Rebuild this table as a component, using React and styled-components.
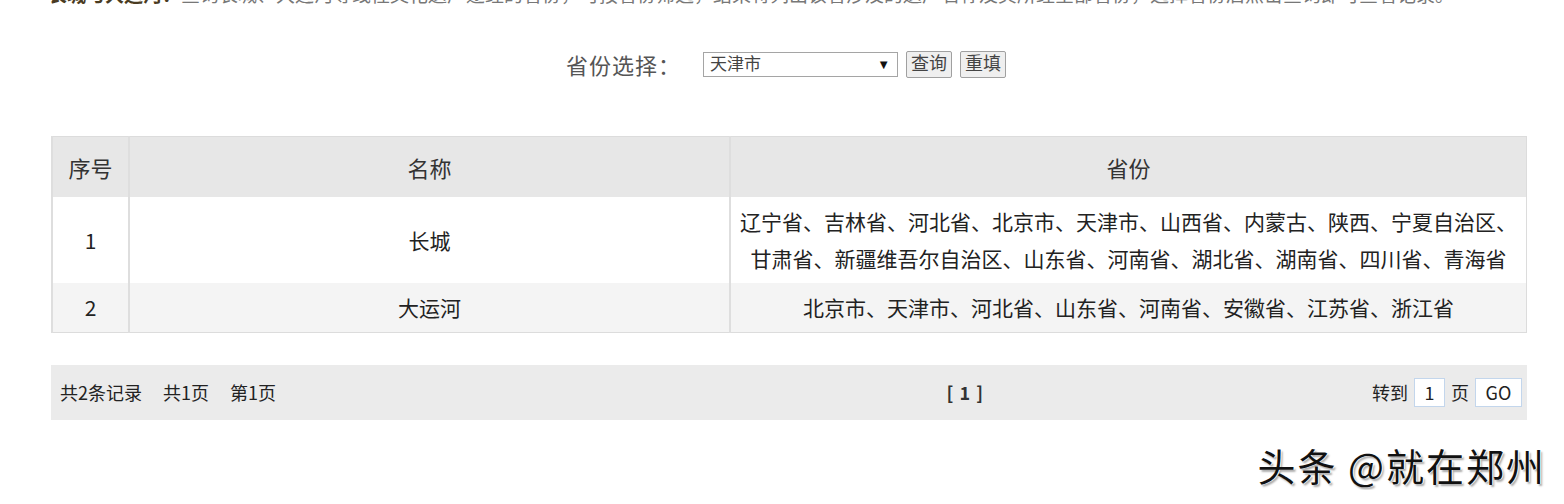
import React from "react";
import styled, { createGlobalStyle } from "styled-components";

const GlobalStyle = createGlobalStyle`
  body {
    margin: 0;
    background: #fff;
    font-family: "Noto Sans CJK SC", "Noto Sans", sans-serif;
    color: #222;
  }
`;

const Page = styled.div`
  width: 1564px;
  display: flex;
  flex-direction: column;
`;

const IntroClip = styled.div`
  height: 5px;
  overflow: hidden;
  display: flex;
  flex-direction: column;
  justify-content: flex-end;
  padding-left: 48px;
`;

const IntroLine = styled.div`
  font-size: 19px;
  line-height: 22px;
  white-space: nowrap;
  color: #777;
  b {
    color: #4a3b22;
    font-weight: 700;
  }
`;

const FormRow = styled.div`
  display: flex;
  align-items: center;
  justify-content: center;
  height: 27px;
  margin-top: 46px;
  padding-left: 8px;
`;

const Label = styled.span`
  font-size: 22px;
  line-height: 27px;
  color: #555;
  margin-right: 22px;
  letter-spacing: 1px;
`;

const SelectBox = styled.div`
  width: 195px;
  height: 25px;
  box-sizing: border-box;
  border: 1px solid #a5a5a5;
  display: flex;
  align-items: center;
  justify-content: space-between;
  padding: 0 7px 0 6px;
  font-family: "Liberation Serif", "Noto Sans CJK SC", serif;
  font-size: 17px;
  line-height: 23px;
  color: #444;
  span:last-child {
    font-size: 13px;
    color: #111;
  }
`;

const Button = styled.button`
  height: 27px;
  margin-left: 8px;
  padding: 0 4px;
  border: 1px solid #a0a0a0;
  border-radius: 2px;
  background: #efefef;
  font-family: "Liberation Serif", "Noto Sans CJK SC", serif;
  font-size: 18px;
  line-height: 25px;
  color: #444;
`;

const Table = styled.table`
  margin: 58px 0 0 51px;
  width: 1476px;
  border-collapse: collapse;
  table-layout: fixed;
  border: 1px solid #dcdcdc;
`;

const HeadCell = styled.th`
  height: 60px;
  padding: 0;
  background: #e7e7e7;
  border-left: 2px solid #dedede;
  font-size: 22px;
  line-height: 30px;
  font-weight: 400;
  color: #333;
  width: ${(p) => p.$w || "auto"};
`;

const Row = styled.tr`
  background: ${(p) => (p.$alt ? "#f4f4f4" : "#fff")};
`;

const Cell = styled.td`
  padding: 6px 2px;
  text-align: center;
  font-size: 21px;
  line-height: 37px;
  color: #222;
  border-left: 2px solid #dedede;
`;

const Pager = styled.div`
  margin: 32px 0 0 51px;
  width: 1476px;
  height: 55px;
  background: #ebebeb;
  display: grid;
  grid-template-columns: 1fr auto 538px;
  align-items: center;
  padding: 0 5px 0 9px;
  box-sizing: border-box;
  font-size: 18px;
  line-height: 29px;
  color: #222;
`;

const Summary = styled.div`
  span + span {
    margin-left: 21px;
  }
`;

const Current = styled.div`
  font-weight: 700;
  color: #333;
  letter-spacing: 1px;
`;

const Jump = styled.div`
  justify-self: end;
  display: flex;
  align-items: center;
  gap: 6px;
`;

const JumpBox = styled.span`
  height: 29px;
  min-width: ${(p) => p.$w}px;
  box-sizing: border-box;
  border: 1px solid #c3d6ec;
  background: #fff;
  display: inline-flex;
  align-items: center;
  justify-content: center;
  font-size: 18px;
`;

const Watermark = styled.div`
  align-self: flex-end;
  margin: 20px 18px 0 0;
  font-size: 38px;
  line-height: 50px;
  color: #111;
  letter-spacing: 2px;
  text-shadow: 1px 0 0 #fff, 2px 2px 2px rgba(0, 0, 0, 0.35);
`;

const rows = [
  {
    id: 1,
    name: "长城",
    provinces:
      "辽宁省、吉林省、河北省、北京市、天津市、山西省、内蒙古、陕西、宁夏自治区、甘肃省、新疆维吾尔自治区、山东省、河南省、湖北省、湖南省、四川省、青海省",
  },
  {
    id: 2,
    name: "大运河",
    provinces: "北京市、天津市、河北省、山东省、河南省、安徽省、江苏省、浙江省",
  },
];

export default function App() {
  return (
    <Page>
      <GlobalStyle />
      <IntroClip>
        <IntroLine>
          <b>长城与大运河：</b>
          查询长城、大运河等线性文化遗产途经的省份，可按省份筛选，结果将列出该省涉及的遗产名称及其所经全部省份，选择省份后点击查询即可查看记录。
        </IntroLine>
      </IntroClip>

      <FormRow>
        <Label>省份选择：</Label>
        <SelectBox>
          <span>天津市</span>
          <span>▼</span>
        </SelectBox>
        <Button>查询</Button>
        <Button>重填</Button>
      </FormRow>

      <Table>
        <thead>
          <tr>
            <HeadCell $w="75px">序号</HeadCell>
            <HeadCell $w="599px">名称</HeadCell>
            <HeadCell>省份</HeadCell>
          </tr>
        </thead>
        <tbody>
          {rows.map((r, i) => (
            <Row key={r.id} $alt={i % 2 === 1}>
              <Cell>{r.id}</Cell>
              <Cell>{r.name}</Cell>
              <Cell>{r.provinces}</Cell>
            </Row>
          ))}
        </tbody>
      </Table>

      <Pager>
        <Summary>
          <span>共2条记录</span>
          <span>共1页</span>
          <span>第1页</span>
        </Summary>
        <Current>[ 1 ]</Current>
        <Jump>
          <span>转到</span>
          <JumpBox $w={31}>1</JumpBox>
          <span>页</span>
          <JumpBox $w={47}>GO</JumpBox>
        </Jump>
      </Pager>

      <Watermark>头条 @就在郑州</Watermark>
    </Page>
  );
}
